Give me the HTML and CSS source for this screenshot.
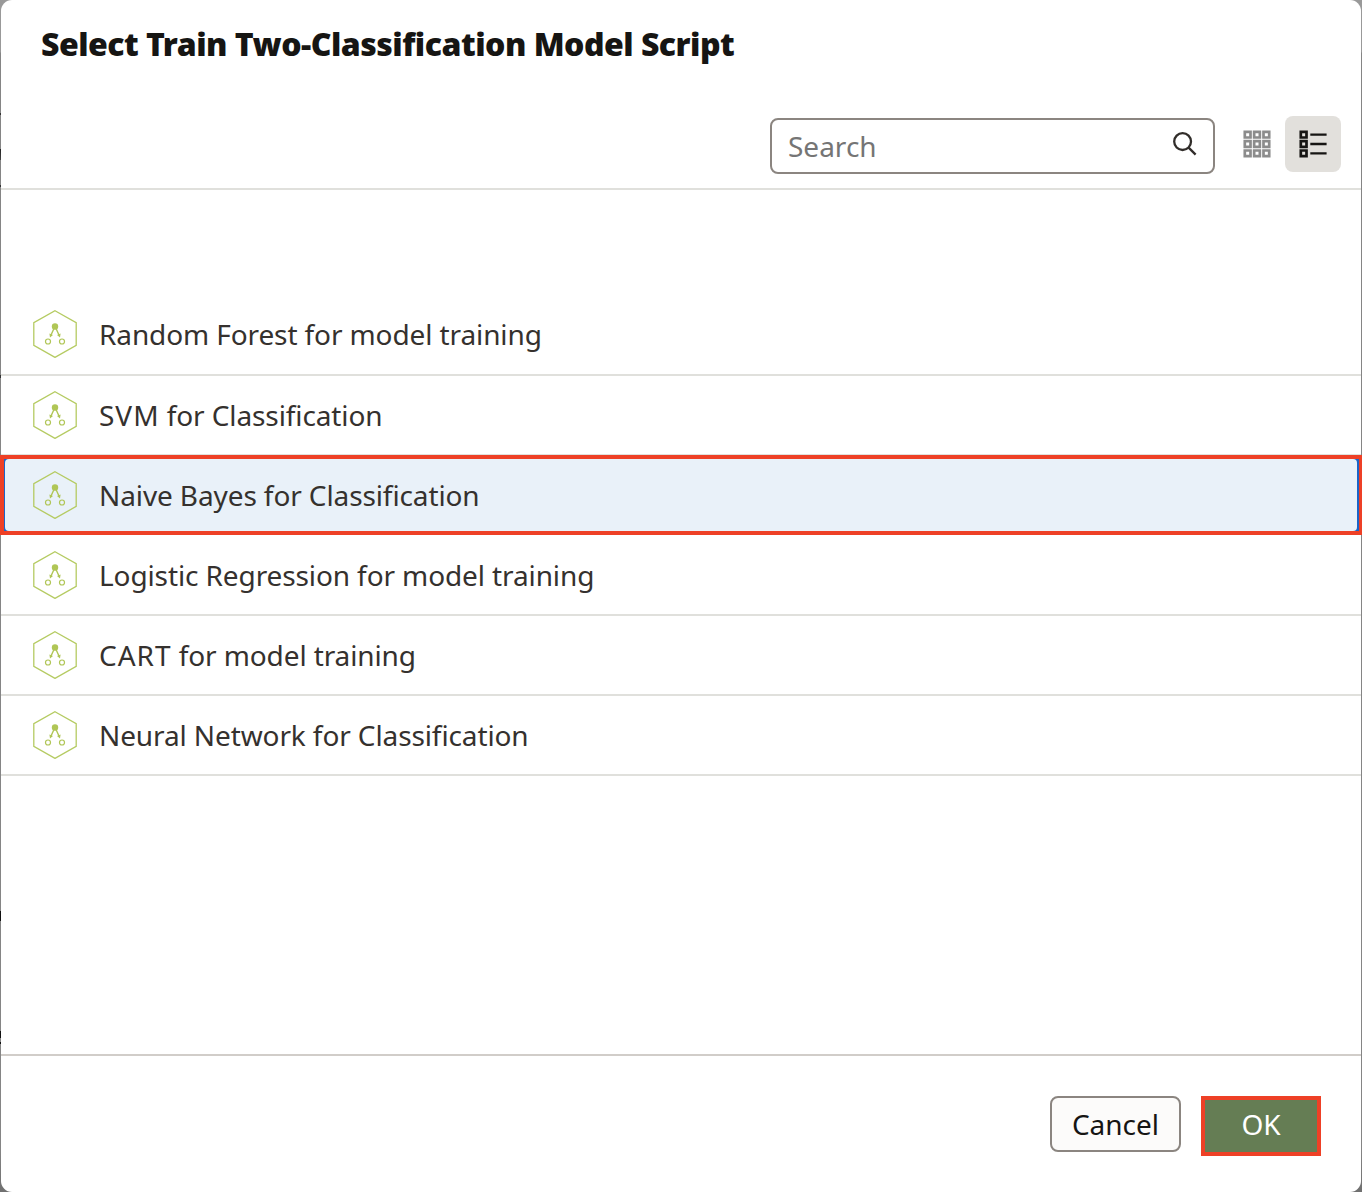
FILE: index.html
```html
<!DOCTYPE html>
<html lang="en">
<head>
<meta charset="utf-8">
<title>Select Train Two-Classification Model Script</title>
<link rel="stylesheet" href="styles.css">
</head>
<body>
<svg class="symbols" width="0" height="0" aria-hidden="true">
  <symbol id="model" viewBox="0 0 44 48">
    <path d="M22 .7 43.2 12.6V35.4L22 47.4.8 35.4V12.6Z" fill="none" stroke="#b5cb62" stroke-width="1.3"/>
    <circle cx="22" cy="16.5" r="3.2" fill="#b0c656"/>
    <path d="M21.2 18 18 25M22.8 18 26 25" stroke="#b0c656" stroke-width="1.4"/>
    <path d="M16.4 23.4 20 25 17 27.4ZM27.6 23.4 24 25 27 27.4Z" fill="#b0c656"/>
    <circle cx="15" cy="31.5" r="2.5" fill="none" stroke="#b0c656" stroke-width="1.2"/>
    <circle cx="29" cy="31.5" r="2.5" fill="none" stroke="#b0c656" stroke-width="1.2"/>
  </symbol>
</svg>
<main class="dialog">
  <h1 class="title">Select Train Two-Classification Model Script</h1>
  <div class="toolbar">
    <div class="search">
      <span class="placeholder">Search</span>
      <svg width="24" height="24" viewBox="0 0 24 24" fill="none" stroke="#312d2a" stroke-width="2.3"><circle cx="9.6" cy="9.6" r="8.4"/><path d="M15.6 15.6 22.6 22.6"/></svg>
    </div>
    <div class="view grid-view">
      <svg width="28" height="28" viewBox="0 0 28 28" fill="none" stroke="#8c8c8c" stroke-width="2.7"><path d="M1.8 1.8h5.7v5.7h-5.7zM11.15 1.8h5.7v5.7h-5.7zM20.5 1.8h5.7v5.7h-5.7zM1.8 11.15h5.7v5.7h-5.7zM11.15 11.15h5.7v5.7h-5.7zM20.5 11.15h5.7v5.7h-5.7zM1.8 20.5h5.7v5.7h-5.7zM11.15 20.5h5.7v5.7h-5.7zM20.5 20.5h5.7v5.7h-5.7z"/></svg>
    </div>
    <div class="view list-view">
      <svg width="28" height="28" viewBox="0 0 28 28" fill="none" stroke="#161513"><path stroke-width="2.7" d="M1.8 1.8h5.7v5.7h-5.7zM1.8 11.15h5.7v5.7h-5.7zM1.8 20.5h5.7v5.7h-5.7z"/><path stroke-width="2.3" d="M11.3 4.7h16.3M11.3 14h16.3M11.3 23.3h16.3"/></svg>
    </div>
  </div>
  <ul class="list">
    <li class="row first"><div class="item"><svg class="model"><use href="#model"/></svg><span class="label">Random Forest for model training</span></div></li>
    <li class="row"><div class="item"><svg class="model"><use href="#model"/></svg><span class="label"><span class="acronym">SVM</span> for Classification</span></div></li>
    <li class="row selected"><div class="item"><svg class="model"><use href="#model"/></svg><span class="label">Naive Bayes for Classification</span></div></li>
    <li class="row"><div class="item"><svg class="model"><use href="#model"/></svg><span class="label">Logistic Regression for model training</span></div></li>
    <li class="row"><div class="item"><svg class="model"><use href="#model"/></svg><span class="label"><span class="acronym">CART</span> for model training</span></div></li>
    <li class="row"><div class="item"><svg class="model"><use href="#model"/></svg><span class="label">Neural Network for Classification</span></div></li>
  </ul>
  <footer class="footer">
    <button class="btn cancel">Cancel</button>
    <button class="btn ok">OK</button>
  </footer>
</main>
</body>
</html>
```
FILE: styles.css
```css
* { box-sizing: border-box; }
body {
  margin: 0;
  height: 1192px;
  padding: 0 1px;
  overflow: hidden;
  background:
    linear-gradient(#333, #333) 0 113px / 1px 2px no-repeat,
    linear-gradient(#222, #444) 0 149px / 1px 11px no-repeat,
    linear-gradient(#333, #333) 0 185px / 1px 2px no-repeat,
    linear-gradient(#333, #333) 0 375px / 1px 3px no-repeat,
    linear-gradient(#111, #111) 0 911px / 1px 10px no-repeat,
    linear-gradient(#111, #111) 0 1031px / 1px 7px no-repeat,
    linear-gradient(#111, #111) 0 1042px / 1px 2px no-repeat,
    linear-gradient(#999 0, #999 52px, #858585 53px, #858585 1150px, #707070 1192px);
  font-family: "Noto Sans", "Open Sans", sans-serif;
  font-size: 28px;
  color: #35312e;
}
.symbols { position: absolute; }
.dialog {
  display: flex;
  flex-direction: column;
  height: 1192px;
  border-radius: 11px;
  background: #fff;
}
.title {
  margin: 0;
  height: 88px;
  padding: 0 40px;
  font-size: 32px;
  font-weight: 900;
  line-height: 88px;
  letter-spacing: -0.51px;
  white-space: nowrap;
  color: #161513;
}
.toolbar {
  display: flex;
  align-items: flex-start;
  justify-content: flex-end;
  height: 102px;
  padding: 28px 20px 0 0;
  border-bottom: 2px solid #e0e0dc;
}
.search {
  display: flex;
  justify-content: space-between;
  width: 445px;
  height: 56px;
  margin: 2px 14px 0 0;
  padding: 12px 16px;
  border: 2px solid #8b8580;
  border-radius: 8px;
  line-height: 28px;
}
.placeholder { color: #757575; }
.view {
  display: grid;
  place-items: center;
  width: 56px;
  height: 56px;
  border-radius: 8px;
}
.list-view { background: #e2e0dc; }
.list {
  flex: 1;
  margin: 0;
  padding: 106px 0 0;
  list-style: none;
}
.row {
  height: 80px;
  border-bottom: 2px solid #e0e0dc;
}
.item {
  display: flex;
  align-items: center;
  gap: 22px;
  height: 100%;
  padding-left: 32px;
  white-space: nowrap;
}
.first { padding-bottom: 2px; }
.model { width: 44px; height: 48px; }
.label {
  padding-bottom: 1px;
  line-height: 40px;
  letter-spacing: -0.11px;
}
.acronym { letter-spacing: 1px; }
.selected {
  margin: -1px -1px 1px;
  padding: 0 2px 0 1px;
  border: 4px solid #ee4026;
  border-right-width: 3px;
  background: #1b65c8;
}
.selected .item {
  padding-left: 28px;
  border-radius: 4px;
  background: #e9f1f9;
}
.footer {
  display: flex;
  align-items: flex-start;
  justify-content: flex-end;
  gap: 20px;
  height: 138px;
  padding: 40px 40px 0 0;
  border-top: 2px solid #d1cdc9;
}
.btn {
  padding: 0;
  font: inherit;
}
.cancel {
  width: 131px;
  height: 56px;
  border: 2px solid #8b8580;
  border-radius: 8px;
  background: #fcfbfa;
  color: #161513;
}
.ok {
  width: 120px;
  height: 60px;
  padding-bottom: 4px;
  border: 4px solid #ee4026;
  background: #657d54;
  color: #fff;
}
```
